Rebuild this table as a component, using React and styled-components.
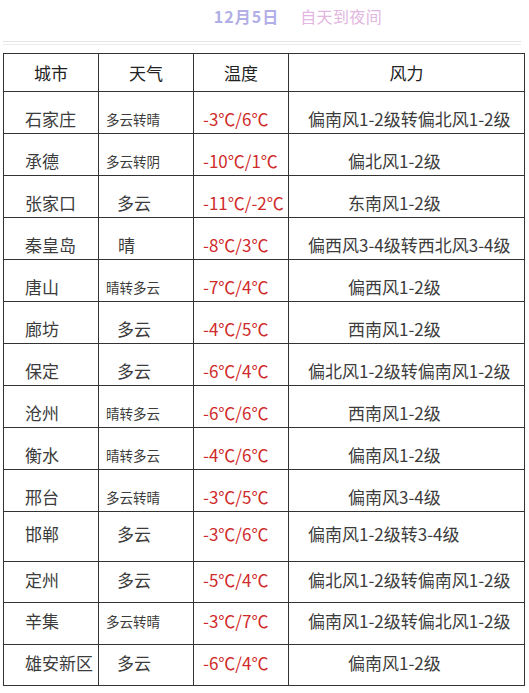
import React from "react";
import styled, { createGlobalStyle } from "styled-components";

const Global = createGlobalStyle`
  html, body { margin: 0; padding: 0; background: #fff; }
  body { font-family: "Noto Sans CJK SC", "Noto Sans", sans-serif; color: #333; }
`;

const Page = styled.div`
  width: 529px;
  padding: 0 0 0 3px;
  box-sizing: border-box;
`;

const Title = styled.div`
  height: 32px;
  display: flex;
  align-items: center;
  justify-content: center;
  gap: 21px;
  padding-left: 64px;
  font-size: 16px;
`;

const Date = styled.span`
  color: #b2aee6;
  font-weight: 700;
  letter-spacing: 1px;
`;

const Span = styled.span`
  color: #e2b6e0;
  letter-spacing: 0.4px;
`;

const Rule = styled.div`
  width: 518px;
  height: 2px;
  margin-top: 9px;
  border-top: 1px solid #e4e4e4;
  border-bottom: 1px solid #ececec;
`;

const Table = styled.table`
  margin-top: 8px;
  border-collapse: collapse;
  table-layout: fixed;
  width: 521px;
  border: 1px solid #333;
`;

const Th = styled.th`
  height: 37px;
  padding: 0;
  font-weight: 400;
  font-size: 17px;
  color: #222;
  text-align: center;
  border: 1px solid #333;
  vertical-align: middle;
`;

const Td = styled.td`
  height: ${(p) => p.$h}px;
  padding: ${(p) => (p.$centered ? "0 0 5px" : "13px 0 0")};
  padding-left: ${(p) => p.$indent}px;
  font-size: ${(p) => (p.$small ? 13.5 : 17)}px;
  color: ${(p) => (p.$red ? "#cf2b2b" : "#3c3c3c")};
  text-align: left;
  white-space: nowrap;
  border: 1px solid #333;
  vertical-align: middle;
  line-height: 20px;
  box-sizing: border-box;
`;

const rows = [
  ["石家庄", "多云转晴", "-3℃/6℃", "偏南风1-2级转偏北风1-2级", 42],
  ["承德", "多云转阴", "-10℃/1℃", "偏北风1-2级", 42],
  ["张家口", "多云", "-11℃/-2℃", "东南风1-2级", 42],
  ["秦皇岛", "晴", "-8℃/3℃", "偏西风3-4级转西北风3-4级", 42],
  ["唐山", "晴转多云", "-7℃/4℃", "偏西风1-2级", 42],
  ["廊坊", "多云", "-4℃/5℃", "西南风1-2级", 42],
  ["保定", "多云", "-6℃/4℃", "偏北风1-2级转偏南风1-2级", 42],
  ["沧州", "晴转多云", "-6℃/6℃", "西南风1-2级", 42],
  ["衡水", "晴转多云", "-4℃/6℃", "偏南风1-2级", 42],
  ["邢台", "多云转晴", "-3℃/5℃", "偏南风3-4级", 42],
  ["邯郸", "多云", "-3℃/6℃", "偏南风1-2级转3-4级", 50, true],
  ["定州", "多云", "-5℃/4℃", "偏北风1-2级转偏南风1-2级", 41, true],
  ["辛集", "多云转晴", "-3℃/7℃", "偏南风1-2级转偏北风1-2级", 42, true],
  ["雄安新区", "多云", "-6℃/4℃", "偏南风1-2级", 41, true],
];

export default function App() {
  return (
    <Page>
      <Global />
      <Title>
        <Date>12月5日</Date>
        <Span>自天到夜间</Span>
      </Title>
      <Rule />
      <Table>
        <colgroup>
          <col style={{ width: 95 }} />
          <col style={{ width: 95 }} />
          <col style={{ width: 95 }} />
          <col style={{ width: 236 }} />
        </colgroup>
        <thead>
          <tr>
            <Th>城市</Th>
            <Th>天气</Th>
            <Th>温度</Th>
            <Th>风力</Th>
          </tr>
        </thead>
        <tbody>
          {rows.map(([city, weather, temp, wind, h, centered]) => {
            const small = weather.length >= 4;
            const long = wind.length > 7;
            const cell = { $h: h, $centered: centered };
            return (
              <tr key={city}>
                <Td {...cell} $indent={21}>{city}</Td>
                <Td {...cell} $small={small} $indent={small ? 7 : weather.length === 1 ? 19 : 18}>
                  {weather}
                </Td>
                <Td {...cell} $red $indent={9}>{temp}</Td>
                <Td {...cell} $indent={long ? 19 : 59}>{wind}</Td>
              </tr>
            );
          })}
        </tbody>
      </Table>
    </Page>
  );
}
